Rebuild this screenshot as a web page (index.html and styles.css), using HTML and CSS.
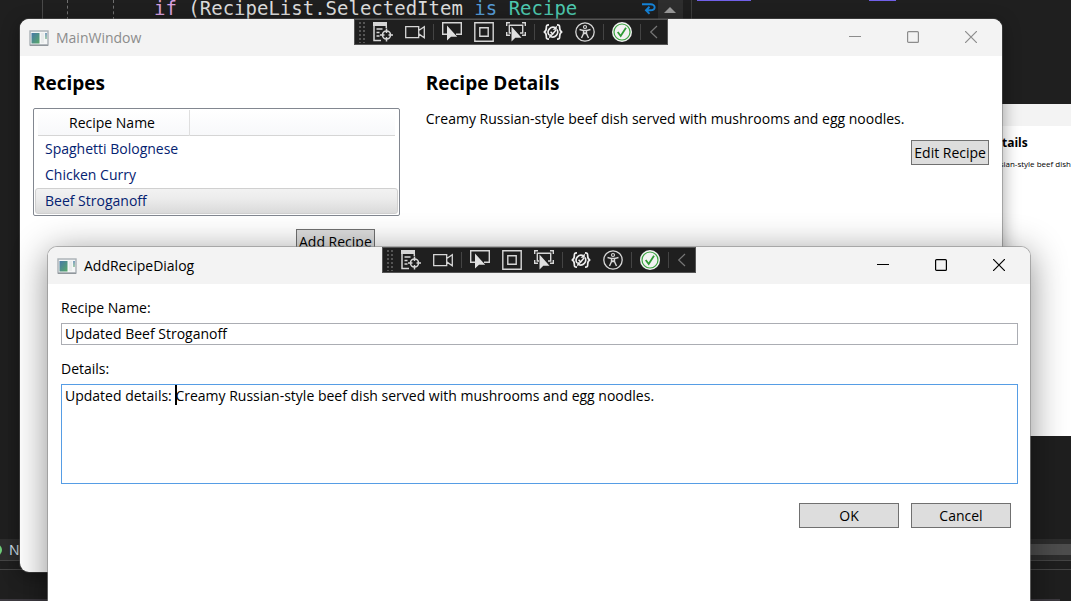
FILE: index.html
```html
<!DOCTYPE html>
<html lang="en">
<head>
<meta charset="utf-8">
<title>MainWindow</title>
<link rel="stylesheet" href="styles.css">
</head>
<body>
<svg class="defs" aria-hidden="true">
  <symbol id="i-app" viewBox="0 0 20 16">
    <rect x="1" y="1" width="18" height="14" fill="#f4f6f6" stroke="#a9b0b5" stroke-width="1.4"/>
    <path d="M1 15.3h18" stroke="#858c92"/>
    <rect x="2.5" y="3" width="8" height="10.5" fill="url(#leaf)"/>
    <path d="M12 3h3v10h-3z" fill="#e9ecec"/>
    <path d="M17 3v6" stroke="url(#leaf2)" stroke-width="1.4"/>
  </symbol>
  <linearGradient id="leaf" x1="0" y1="0" x2="1" y2="1"><stop offset="0" stop-color="#4778a8"/><stop offset="1" stop-color="#58a868"/></linearGradient>
  <linearGradient id="leaf2" gradientUnits="userSpaceOnUse" x1="17" y1="3" x2="17" y2="9"><stop offset="0" stop-color="#4778a8"/><stop offset="1" stop-color="#7fbb8c"/></linearGradient>
  <symbol id="i-tree" viewBox="0 0 20 20">
    <path d="M0 0h14v4H0z" fill="#d6d6d6"/>
    <path d="M1 4v14.5h7M13.300 4v2M3.500 7h6M3.500 10.500h3M3.500 14h3" fill="none" stroke="#d6d6d6" stroke-width="1.5"/>
    <circle cx="13.500" cy="13" r="4" fill="#1f1f1f" stroke="#d6d6d6" stroke-width="1.6"/>
    <path d="M13.500 6.500V11M13.500 15v4.500M7 13h4.500M15.500 13H20" stroke="#d6d6d6" stroke-width="1.5"/>
  </symbol>
  <symbol id="i-camera" viewBox="0 0 20 20">
    <path d="M.7 4.700h13v11H.7zM13.700 8.500l5.600-3.800v11l-5.600-3.800" fill="none" stroke="#d6d6d6" stroke-width="1.3"/>
  </symbol>
  <symbol id="i-select" viewBox="0 0 20 20">
    <path d="M5 12.300H.7V.7h18.600v11.600H14" fill="none" stroke="#d6d6d6" stroke-width="1.4"/>
    <path d="M5 3.500v15l4-3.800h6.200z" fill="#e0e0e0"/>
  </symbol>
  <symbol id="i-layout" viewBox="0 0 20 20">
    <path d="M.8.8h18.400v18.400H.8zM5.800 5.800h8.400v8.400H5.800z" fill="none" stroke="#d6d6d6" stroke-width="1.4"/>
  </symbol>
  <symbol id="i-track" viewBox="0 0 20 20">
    <path d="M.7 4V.7H4M16 .7h3.300V4M.7 10v3.300H4M16 13.300h3.300V10M5 11H3.300V3.300h13.400V11H14" fill="none" stroke="#d6d6d6" stroke-width="1.4"/>
    <path d="M5.500 4.500v15l3.800-3.800h6.200z" fill="#e0e0e0"/>
  </symbol>
  <symbol id="i-reload" viewBox="0 0 20 20">
    <path d="M6 2.800C3.500 2.800 3.300 3.500 3.300 6S3 9.500.8 10c2.200.5 2.500 1.500 2.500 4s.2 3.200 2.700 3.200M14 2.800c2.500 0 2.700.7 2.700 3.200s.3 3.500 2.500 4c-2.200.5-2.500 1.500-2.500 4s-.2 3.200-2.700 3.200" fill="none" stroke="#eeeeee" stroke-width="1.700"/>
    <path d="M12.500 5.800A5 5 0 0 0 6 13M7.500 14.500A5 5 0 0 0 14 7.500" fill="none" stroke="#eeeeee" stroke-width="1.600"/>
    <path d="M13.800 3.500v4.200H9.600zM6.200 16.500v-4.200h4.200z" fill="#eeeeee"/>
    <path d="M7.600 9.800l2 2.200 3.400-4" fill="none" stroke="#eeeeee" stroke-width="1.500"/>
  </symbol>
  <symbol id="i-access" viewBox="0 0 20 20">
    <circle cx="10" cy="10" r="9.200" fill="none" stroke="#d6d6d6" stroke-width="1.300"/>
    <circle cx="10" cy="5" r="1.500" fill="none" stroke="#d6d6d6" stroke-width="1.200"/>
    <path d="M4.500 7.500l4 1v3L6.500 16M15.500 7.500l-4 1v3l2 4.500M8.500 8.500h3M8.700 12l1.300-1 1.300 1" fill="none" stroke="#d6d6d6" stroke-width="1.400"/>
  </symbol>
  <symbol id="i-ok" viewBox="0 0 20 20">
    <circle cx="10" cy="10" r="10" fill="#f2f2f2"/>
    <circle cx="10" cy="10" r="8" fill="none" stroke="#3aa33f" stroke-width="1.200"/>
    <path d="M5.700 10l3 4L14 5.800" fill="none" stroke="#2e9a34" stroke-width="1.800"/>
  </symbol>
  <symbol id="i-back" viewBox="0 0 20 20">
    <path d="M13 4l-6.300 6 6.300 6" fill="none" stroke="#777777" stroke-width="1.200"/>
  </symbol>
  <symbol id="i-min" viewBox="0 0 12 12"><path d="M0 5.500h12" stroke="currentColor"/></symbol>
  <symbol id="i-max" viewBox="0 0 12 12"><rect x=".6" y=".6" width="10.800" height="10.800" rx="1" fill="none" stroke="currentColor" stroke-width="1.200"/></symbol>
  <symbol id="i-close" viewBox="0 0 12 12"><path d="M0 0l12 12M12 0L0 12" stroke="currentColor" stroke-width="1.200"/></symbol>
</svg>

<div class="ide">
  <div class="editors">
    <div class="pane code">
      <span class="margin"></span><span class="guide"></span><span class="guide"></span>
      <code><span class="kw-flow">if</span> (RecipeList.SelectedItem <span class="kw">is</span> <span class="type">Recipe</span></code>
      <svg class="wrap" viewBox="0 0 14 12"><path d="M0 1.200h8.500c5.500 0 5.500 6 0 6H4.500M7.500 3.800L4 7.200l3.500 3.600" fill="none" stroke="#1583d7" stroke-width="1.900"/></svg>
      <span class="scroll"><svg viewBox="0 0 12 6"><path d="M0 6l6-6 6 6z" fill="#9b9b9b"/></svg></span>
    </div>
    <div class="pane side"><span class="mark long"></span><span class="mark"></span></div>
  </div>
  <div class="health"><span class="dot"></span><span>No issues found</span><span class="thumb"></span></div>
  <div class="output"></div>
  <div class="tabs"></div>
</div>

<section class="preview">
  <div class="preview-bar"></div>
  <div class="preview-body">
    <h3>Details</h3>
    <p>Russian-style beef dish</p>
  </div>
</section>

<main class="window main">
  <header class="titlebar">
    <svg class="app"><use href="#i-app"/></svg>
    <span class="caption">MainWindow</span>
    <button aria-label="Minimize"><svg><use href="#i-min"/></svg></button>
    <button aria-label="Maximize"><svg><use href="#i-max"/></svg></button>
    <button aria-label="Close"><svg><use href="#i-close"/></svg></button>
  </header>
  <div class="debug" role="toolbar" aria-label="Debug tools">
    <span class="grip"></span>
    <button aria-label="Live visual tree"><svg><use href="#i-tree"/></svg></button>
    <button aria-label="Record"><svg><use href="#i-camera"/></svg></button>
    <span class="sep"></span>
    <button aria-label="Select element"><svg><use href="#i-select"/></svg></button>
    <button aria-label="Layout adorners"><svg><use href="#i-layout"/></svg></button>
    <button aria-label="Track focus"><svg><use href="#i-track"/></svg></button>
    <span class="sep"></span>
    <button aria-label="Hot reload"><svg><use href="#i-reload"/></svg></button>
    <button aria-label="Accessibility"><svg><use href="#i-access"/></svg></button>
    <span class="sep"></span>
    <button aria-label="Binding status"><svg><use href="#i-ok"/></svg></button>
    <span class="sep"></span>
    <button class="last" aria-label="Collapse"><svg><use href="#i-back"/></svg></button>
  </div>
  <div class="columns">
    <section class="recipes">
      <h2>Recipes</h2>
      <div class="list">
        <table>
          <thead><tr><th>Recipe Name</th><th class="rest"></th></tr></thead>
          <tbody>
            <tr><td colspan="2">Spaghetti Bolognese</td></tr>
            <tr><td colspan="2">Chicken Curry</td></tr>
            <tr class="selected"><td colspan="2">Beef Stroganoff</td></tr>
          </tbody>
        </table>
      </div>
      <button class="btn add">Add Recipe</button>
    </section>
    <section class="details">
      <h2>Recipe Details</h2>
      <p>Creamy Russian-style beef dish served with mushrooms and egg noodles.</p>
      <button class="btn">Edit Recipe</button>
    </section>
  </div>
</main>

<div class="window dialog" role="dialog" aria-label="AddRecipeDialog">
  <header class="titlebar">
    <svg class="app"><use href="#i-app"/></svg>
    <span class="caption">AddRecipeDialog</span>
    <button aria-label="Minimize"><svg><use href="#i-min"/></svg></button>
    <button aria-label="Maximize"><svg><use href="#i-max"/></svg></button>
    <button aria-label="Close"><svg><use href="#i-close"/></svg></button>
  </header>
  <div class="debug" role="toolbar" aria-label="Debug tools">
    <span class="grip"></span>
    <button aria-label="Live visual tree"><svg><use href="#i-tree"/></svg></button>
    <button aria-label="Record"><svg><use href="#i-camera"/></svg></button>
    <span class="sep"></span>
    <button aria-label="Select element"><svg><use href="#i-select"/></svg></button>
    <button aria-label="Layout adorners"><svg><use href="#i-layout"/></svg></button>
    <button aria-label="Track focus"><svg><use href="#i-track"/></svg></button>
    <span class="sep"></span>
    <button aria-label="Hot reload"><svg><use href="#i-reload"/></svg></button>
    <button aria-label="Accessibility"><svg><use href="#i-access"/></svg></button>
    <span class="sep"></span>
    <button aria-label="Binding status"><svg><use href="#i-ok"/></svg></button>
    <span class="sep"></span>
    <button class="last" aria-label="Collapse"><svg><use href="#i-back"/></svg></button>
  </div>
  <form class="form">
    <label for="name">Recipe Name:</label>
    <input id="name" type="text" value="Updated Beef Stroganoff">
    <label for="details">Details:</label>
    <div class="area">
      <textarea id="details">Updated details: Creamy Russian-style beef dish served with mushrooms and egg noodles.</textarea>
      <span class="caret"></span>
    </div>
    <div class="actions">
      <button type="button" class="btn">OK</button>
      <button type="button" class="btn">Cancel</button>
    </div>
  </form>
</div>
</body>
</html>
```

FILE: styles.css
```css
* { box-sizing: border-box; }

body {
  margin: 0;
  height: 100vh;
  overflow: hidden;
  position: relative;
  background: #1f1f1f;
  color: #000;
  font: 14px/22px "Open Sans", "Noto Sans", sans-serif;
}

h2, h3, p { margin: 0; }
button, input, textarea { font: inherit; color: inherit; border-radius: 0; margin: 0; }
svg { display: block; }
.defs { position: absolute; width: 0; height: 0; }

/* IDE behind the windows */
.ide { height: 100%; display: flex; flex-direction: column; }
.editors { flex: 1; display: flex; min-height: 0; }
.pane { display: flex; align-items: flex-start; }
.code { width: 692px; border-right: 1px solid #3d3d3d; }
.margin { width: 43px; height: 100%; border-right: 1px solid #4a4a4a; }
.guide { width: 25px; height: 20px; border-right: 1px dashed #707070; }
.guide + .guide { width: 46px; }
.code code {
  flex: 1;
  padding-left: 40px;
  white-space: pre;
  color: #dcdcdc;
  font: 19px/16px "DejaVu Sans Mono", monospace;
}
.kw-flow { color: #d8a0df; }
.kw { color: #569cd6; }
.type { color: #4ec9b0; }
.wrap { width: 14px; height: 12px; margin: 3px 2px 0 0; }
.scroll { width: 25px; height: 100%; margin-right: 8px; padding: 7px 6px; background: #2e2e2e; }
.scroll svg { width: 12px; height: 6px; }
.side { flex: 1; padding-left: 5px; gap: 118px; }
.mark { width: 27px; height: 1px; background: #7160e8; }
.mark.long { width: 54px; }
.health {
  height: 22px;
  display: flex;
  align-items: center;
  gap: 7px;
  overflow: hidden;
  background: #2d2d2d;
  border-bottom: 1px solid #454545;
  color: #d8e6f4;
}
.dot { width: 12px; height: 12px; margin-left: -10px; border-radius: 50%; background: #6fcf7a; }
.thumb { flex: 1; height: 11px; margin-left: 600px; background: #4d4d4d; }
.output { height: 30px; margin-top: 8px; border-top: 1px solid #454545; }
.tabs { height: 2px; width: 99%; background: #3d3a40; }

.preview {
  position: absolute;
  left: 900px;
  right: 0;
  top: 104px;
  height: 332px;
  overflow: hidden;
  background: #fff;
}
.preview-bar { height: 22px; background: #f3f3f3; }
.preview-body { padding: 7px 0 0 86px; white-space: nowrap; }
.preview h3 { font-size: 12px; line-height: 20px; }
.preview p { font-size: 8px; line-height: 22px; }

/* Windows */
.window { position: absolute; background: #fff; border-radius: 9px; }
.main { left: 20px; right: 69px; top: 19px; bottom: 29px; box-shadow: 0 0 0 1px #6666, 0 4px 18px #0006; }
.dialog {
  left: 48px;
  right: 41px;
  top: 247px;
  bottom: -30px;
  box-shadow: 0 0 0 1px #8889, 0 6px 36px #0007;
}
.titlebar {
  height: 37px;
  display: flex;
  align-items: center;
  padding: 0 2px 0 9px;
  border-radius: 9px 9px 0 0;
  background: #f3f3f3;
}
.app { width: 20px; height: 16px; }
.caption { flex: 1; padding-left: 7px; }
.main .titlebar { color: #8c8c8c; }
.titlebar button {
  width: 58px;
  height: 35px;
  align-self: flex-start;
  display: grid;
  place-items: center;
  border: 0;
  padding: 0;
  background: none;
}
.titlebar button svg { width: 12px; height: 12px; }

.debug {
  position: absolute;
  top: 0;
  left: 0;
  right: 0;
  width: 314px;
  height: 26px;
  margin: 0 auto;
  display: flex;
  align-items: center;
  background: #1f1f1f;
  border: 1px solid #555;
}
.grip {
  width: 7px;
  height: 22px;
  margin: 0 2px 0 3px;
  background: radial-gradient(circle, #555 1px, transparent 1px) 0 0 / 4px 4px;
}
.debug button { width: 32px; height: 24px; display: grid; place-items: center; padding: 0; border: 0; background: none; }
.debug button.last { width: 22px; }
.debug svg { width: 20px; height: 20px; }
.sep { width: 5px; height: 16px; background: linear-gradient(#444, #444) center / 1px 100% no-repeat; }

.columns { display: grid; grid-template-columns: 2fr 3fr; }
.columns > section { padding: 12px 13px; display: flex; flex-direction: column; }
h2 { font-size: 19px; line-height: 30px; margin-bottom: 10px; }
.list { border: 1px solid #828790; border-radius: 2px; padding: 1px; }
table { width: 100%; border-collapse: separate; border-spacing: 0; }
th {
  width: 155px;
  height: 26px;
  padding: 0;
  font-weight: 400;
  background:
    linear-gradient(#d5d5d5, #d5d5d5) right bottom / calc(100% - 3px) 1px no-repeat,
    linear-gradient(#fff, #f7f8fa) right / calc(100% - 3px) 100% no-repeat;
  border-right: 1px solid #dfdfdf;
}
th.rest { width: auto; border-right: 0; background-position: left bottom, left; }
td { height: 26px; padding: 0 9px; color: #042271; border: 1px solid transparent; }
.selected td { border-color: #d0d0d0; border-radius: 3px; background: linear-gradient(#f2f2f2, #ececec 40%, #dadada); }
.btn { height: 25px; padding: 0 2px; border: 1px solid #707070; background: #ddd; line-height: 22px; }
.add { align-self: flex-end; margin: 13px 25px 0 0; }
.details .btn { align-self: flex-end; margin-top: 10px; }

.form { padding: 13px 12px 13px 13px; display: flex; flex-direction: column; }
.form label { margin-bottom: 4px; }
.form input { height: 22px; margin-bottom: 13px; padding: 0 3px; border: 1px solid #abadb3; background: #fff; }
.area { position: relative; height: 100px; }
textarea {
  display: block;
  width: 100%;
  height: 100%;
  padding: 0 3px;
  border: 1px solid #569de5;
  background: #fff;
  resize: none;
  outline: 0;
}
.caret { position: absolute; left: 114px; top: 1px; width: 2px; height: 20px; background: #000; }
.actions { display: flex; justify-content: flex-end; gap: 12px; margin: 19px 7px 0 0; }
.actions .btn { width: 100px; }
```
